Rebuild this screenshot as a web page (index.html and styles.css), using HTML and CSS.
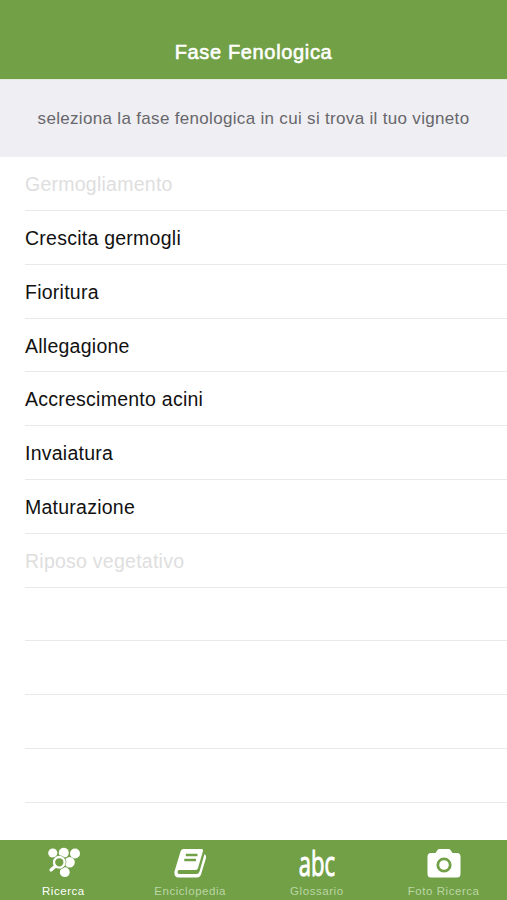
FILE: index.html
```html
<!DOCTYPE html>
<html lang="it">
<head>
<meta charset="utf-8">
<title>Fase Fenologica</title>
<link rel="stylesheet" href="styles.css">
</head>
<body>
<div class="app">
  <header class="navbar"><h1 class="title">Fase Fenologica</h1></header>
  <p class="prompt">seleziona la fase fenologica in cui si trova il tuo vigneto</p>
  <ul class="list">
    <li class="row disabled">Germogliamento</li>
    <li class="row">Crescita germogli</li>
    <li class="row">Fioritura</li>
    <li class="row">Allegagione</li>
    <li class="row">Accrescimento acini</li>
    <li class="row">Invaiatura</li>
    <li class="row">Maturazione</li>
    <li class="row disabled">Riposo vegetativo</li>
    <li class="row"></li>
    <li class="row"></li>
    <li class="row"></li>
    <li class="row"></li>
  </ul>
  <nav class="tabs">
    <a class="tab active">
      <svg class="icon" viewBox="0 0 44 34">
        <g fill="#fff">
          <circle cx="11.800" cy="7" r="4.600"/><circle cx="22.800" cy="6.800" r="5"/><circle cx="34" cy="7.500" r="5"/>
          <circle cx="28.600" cy="16.300" r="5.200"/><circle cx="23.800" cy="26.200" r="4.900"/>
        </g>
        <circle cx="18.300" cy="16.300" r="7" fill="#71a046"/>
        <circle cx="18.300" cy="16.300" r="5.300" fill="none" stroke="#fff" stroke-width="2.300"/>
        <path d="M14.200 20.300 10 24" stroke="#fff" stroke-width="3.200" stroke-linecap="round"/>
      </svg>
      <span class="label">Ricerca</span>
    </a>
    <a class="tab">
      <svg class="icon" viewBox="0 0 44 34">
        <path d="M15 3H33.500Q35.500 3 35 5L30 22Q29.500 24 27.500 24H10.500Q8.500 26 10.500 28H28.500Q30.700 28 31.500 25.500L36.500 8Q38.700 9.500 38 12L33 28.500Q32 31.500 29 31.500H11Q5.500 31.500 6.500 25.500L12.500 5.500Q13.300 3 15 3Z" fill="#fff"/>
        <path d="M17.800 9H29.500M16.300 14H28" stroke="#71a046" stroke-width="2.300"/>
      </svg>
      <span class="label">Enciclopedia</span>
    </a>
    <a class="tab">
      <svg class="icon" viewBox="0 0 44 34"><text class="abc" transform="translate(22 30.2) scale(.64 1)" text-anchor="middle">abc</text></svg>
      <span class="label">Glossario</span>
    </a>
    <a class="tab">
      <svg class="icon" viewBox="0 0 44 34">
        <path d="M9 7H13.500L15.500 4Q16 3 17.500 3H26.500Q28 3 28.500 4L30.500 7H35Q38.500 7 38.500 10.500V28Q38.500 31.500 35 31.500H9Q5.500 31.500 5.500 28V10.500Q5.500 7 9 7Z" fill="#fff"/>
        <circle cx="22" cy="19" r="6.200" fill="none" stroke="#71a046" stroke-width="2.800"/>
      </svg>
      <span class="label">Foto Ricerca</span>
    </a>
  </nav>
</div>
</body>
</html>
```
FILE: styles.css
```css
* { box-sizing: border-box; }
body { margin: 0; background: #fff; font-family: "Liberation Sans", Arial, sans-serif; }
.app { height: 900px; display: flex; flex-direction: column; overflow: hidden; }
.navbar { height: 79px; padding-top: 25px; background: #71a046; display: flex; align-items: center; justify-content: center; }
.title { margin: 0; color: #fff; font-size: 20px; line-height: 24px; font-weight: 400; letter-spacing: .65px; -webkit-text-stroke: .6px #fff; }
.prompt { margin: 0; height: 78px; border-top: 1px solid #e5eadf; background: #efeef3; color: #67676b; font-size: 17px; line-height: 77px; text-align: center; letter-spacing: .32px; white-space: nowrap; }
.list { margin: 0; padding: .4px 0 0 25px; list-style: none; flex: 1; }
.row { height: 53.770px; border-bottom: 1px solid #e9e9ea; color: #111; font-size: 19.500px; line-height: 54px; letter-spacing: .25px; }
.disabled { color: #dedede; }
.tabs { height: 60px; background: #71a046; display: grid; grid-template-columns: repeat(4, 1fr); }
.tab { display: flex; flex-direction: column; align-items: center; color: #bdd6a5; }
.active { color: #fff; }
.icon { width: 44px; height: 34px; margin-top: 6px; overflow: visible; }
.label { margin-top: 4px; font-size: 11.500px; line-height: 15px; letter-spacing: .55px; }
.abc { font-family: "Open Sans", sans-serif; font-size: 34.500px; fill: #fff; stroke: #fff; stroke-width: 1px; }
```
